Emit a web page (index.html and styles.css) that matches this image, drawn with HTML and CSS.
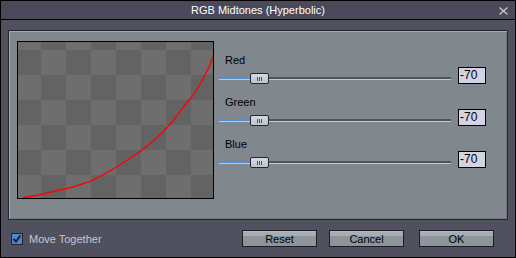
FILE: index.html
```html
<!DOCTYPE html>
<html>
<head>
<meta charset="utf-8">
<link rel="stylesheet" href="styles.css">
</head>
<body>
<div class="window">
  <div class="titlebar">
    <span class="title">RGB Midtones (Hyperbolic)</span>
    <svg class="close" width="9" height="8" viewBox="0 0 9 8"><path d="M0.5 0.5 L8.5 7.5 M8.5 0.5 L0.5 7.5" stroke="#c9c9d3" stroke-width="1.3" fill="none"/></svg>
  </div>
  <div class="content">
    <div class="panel">
      <div class="graph">
        <svg width="195" height="156" viewBox="0 0 195 156">
          <polyline fill="none" stroke="#ff0000" stroke-width="1.4" points="5,155.7 20,153.2 32,150.3 52,145.7 72,139.7 92,129 108,119 122,109.7 135,99 145.3,89.7 155,79 162,69.7 170,59 175.3,53 181,44 185.3,36.3 189,29 192,23 194.7,14.7"/>
        </svg>
      </div>
      <div class="sliders">
        <div class="group">
          <div class="label">Red</div>
          <div class="control">
            <div class="slider"><div class="track"><div class="fill" style="width:32px"></div><div class="thumb" style="left:31px"></div></div></div>
            <div class="value">-70</div>
          </div>
        </div>
        <div class="group">
          <div class="label">Green</div>
          <div class="control">
            <div class="slider"><div class="track"><div class="fill" style="width:32px"></div><div class="thumb" style="left:31px"></div></div></div>
            <div class="value">-70</div>
          </div>
        </div>
        <div class="group">
          <div class="label">Blue</div>
          <div class="control">
            <div class="slider"><div class="track"><div class="fill" style="width:32px"></div><div class="thumb" style="left:31px"></div></div></div>
            <div class="value">-70</div>
          </div>
        </div>
      </div>
    </div>
    <div class="footer">
      <div class="check">
        <span class="box"><svg width="10" height="10" viewBox="0 0 10 10"><path d="M1.5 5 L4 7.5 L8.5 1.5" stroke="#14203a" stroke-width="2" fill="none"/></svg></span>
        <span class="check-label">Move Together</span>
      </div>
      <div class="buttons">
        <button class="btn btn-reset">Reset</button>
        <button class="btn btn-cancel">Cancel</button>
        <button class="btn btn-ok">OK</button>
      </div>
    </div>
  </div>
</div>
</body>
</html>
```
FILE: styles.css
```css
html, body {
  margin: 0;
  padding: 0;
  background: #51505f;
}
body {
  font-family: "Liberation Sans", Arial, sans-serif;
  font-size: 11px;
}
.window {
  width: 516px;
  height: 258px;
  box-sizing: border-box;
  border: 1px solid #000;
  background: #51505f;
  display: flex;
  flex-direction: column;
}
.titlebar {
  height: 18px;
  border-bottom: 1px solid #000;
  background: #4a4959;
  display: grid;
  grid-template-columns: 1fr auto 1fr;
  align-items: center;
}
.title {
  grid-column: 2;
  color: #ffffff;
  font-size: 11px;
  line-height: 18px;
  white-space: nowrap;
}
.close {
  grid-column: 3;
  justify-self: end;
  margin-right: 7px;
  margin-top: 1px;
}
.content {
  padding: 10px 7px 0 7px;
  flex: 1;
  display: flex;
  flex-direction: column;
}
.panel {
  width: 500px;
  height: 190px;
  box-sizing: border-box;
  border: 1px solid #24252d;
  background: #80878d;
  box-shadow: inset 1px 1px 0 #a4abb1, inset -1px -1px 0 #6f767c;
  padding: 10px 8px;
  display: flex;
}
.graph {
  width: 197px;
  height: 158px;
  box-sizing: border-box;
  border: 1px solid #000;
  background-color: #636363;
  background-image: repeating-conic-gradient(#636363 0 25%, #6e6e6e 0 50%);
  background-size: 50px 50px;
  background-position: -2px -17px;
}
.graph svg {
  display: block;
}
.sliders {
  margin-left: 5px;
  margin-top: 12px;
  display: flex;
  flex-direction: column;
}
.group {
  margin-bottom: 11px;
}
.label {
  height: 14px;
  line-height: 14px;
  padding-left: 6px;
  color: #000;
  font-size: 11px;
}
.control {
  display: flex;
  height: 17px;
}
.slider {
  width: 232px;
  padding-top: 10px;
}
.track {
  position: relative;
  height: 2px;
  background: #4d545a;
  border-bottom: 1px solid #c4c9ce;
}
.fill {
  position: absolute;
  left: 0;
  top: 0;
  height: 2px;
  background: #4f8fd6;
}
.thumb {
  position: absolute;
  top: -4px;
  width: 19px;
  height: 11px;
  box-sizing: border-box;
  border: 1px solid #26272e;
  border-radius: 2px;
  background: linear-gradient(#d6d9e0, #bfc3cc);
  display: flex;
  align-items: center;
  justify-content: center;
}
.thumb::after {
  content: "";
  width: 5px;
  height: 4px;
  background: repeating-linear-gradient(90deg, #50535c 0 1px, transparent 1px 2px);
}
.value {
  margin-left: 7px;
  width: 28px;
  height: 17px;
  box-sizing: border-box;
  border: 1px solid #000;
  background: #d3d3e3;
  color: #000;
  font-size: 12px;
  line-height: 15px;
  padding-left: 1px;
}
.footer {
  height: 37px;
  display: flex;
  align-items: center;
}
.check {
  display: flex;
  align-items: center;
  margin-left: 3px;
}
.box {
  width: 12px;
  height: 12px;
  box-sizing: border-box;
  border: 1px solid #23242b;
  background: #4f86c8;
  display: flex;
  align-items: center;
  justify-content: center;
}
.box svg {
  display: block;
}
.check-label {
  margin-left: 6px;
  color: #c6c6d6;
  font-size: 11px;
}
.buttons {
  margin-left: auto;
  margin-right: 14px;
  display: flex;
}
.btn {
  width: 75px;
  height: 17px;
  box-sizing: border-box;
  border: 1px solid #1c1d24;
  background: linear-gradient(#b3b9bf 0, #b3b9bf 1px, #a6adb3 1px, #a6adb3 5px, #8d959b 5px);
  color: #000;
  font-family: "Liberation Sans", Arial, sans-serif;
  font-size: 11px;
  line-height: 14px;
  padding: 0;
  margin: 0;
}
.btn-cancel {
  margin-left: 12px;
}
.btn-ok {
  margin-left: 15px;
}
```
